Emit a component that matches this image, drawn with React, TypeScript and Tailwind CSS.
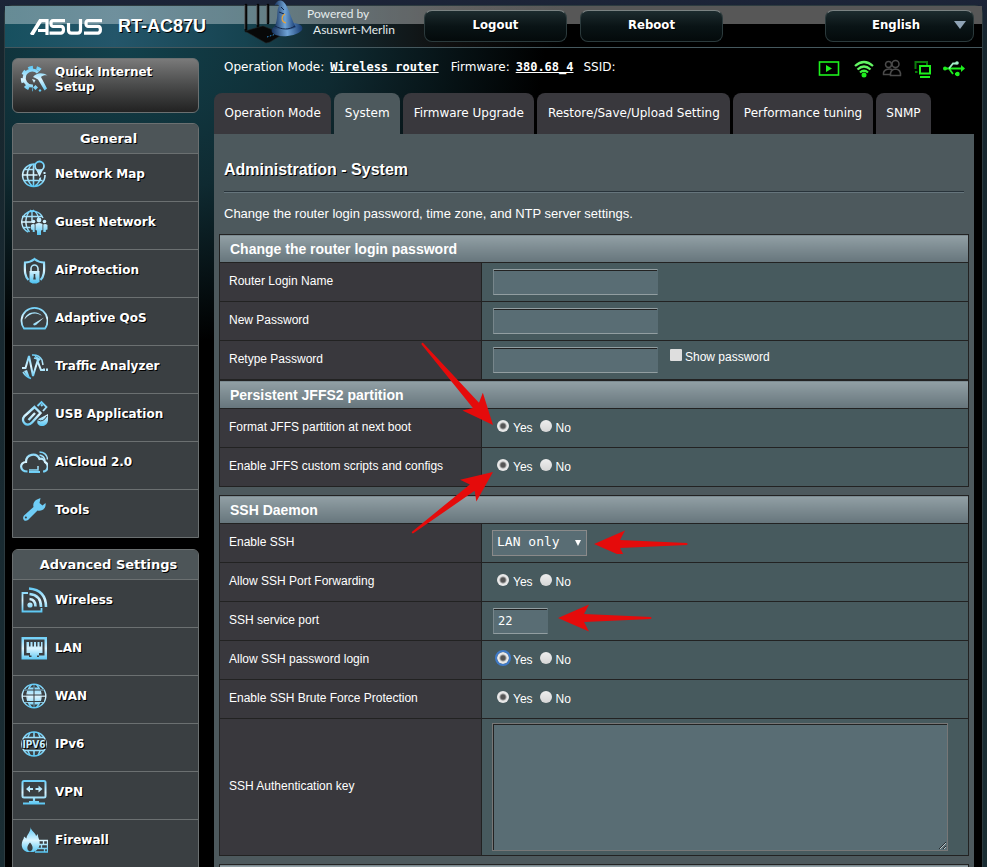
import type { ReactNode } from "react";

const verdana = "font-['DejaVu_Sans',sans-serif]";
const tahoma = "font-['DejaVu_Sans_Condensed','DejaVu_Sans',sans-serif]";
const arial = "font-['Liberation_Sans',Arial,sans-serif]";
const mono = "font-['DejaVu_Sans_Mono',monospace]";
const shadow = "[text-shadow:1px_1px_0_#000]";

function Icon({ children }: { children: ReactNode }) {
  return (
    <svg
      viewBox="0 0 28 28"
      className="h-7 w-7 shrink-0"
      fill="none"
      stroke="url(#ice)"
      strokeWidth="1.6"
      aria-hidden="true"
    >
      {children}
    </svg>
  );
}

const ice = "url(#ice)";

const SetupIcon = () => (
  <Icon>
    <path strokeWidth="3" d="M18 7.500A8 8 0 1 0 13 21" />
    <path strokeWidth="3.500" strokeDasharray="4.500 3.600" d="M20.500 5A11 11 0 1 0 13 24.500" />
    <path
      fill={ice}
      stroke="none"
      d="M13 12c4-5 10-4.500 14.500-1.500-3-.5-5 .3-6.500 1.500l6 11.500-2.500 2L18 14.500c-2-1-3.500-2-5-2.500zM12 14l3.500 1-1.500 3zM15.500 20l2.500 2.500-2.500 2.500-2.500-2.500zM20 24l1.500 1.500L20 27l-1.500-1.500z"
    />
  </Icon>
);

const MapIcon = () => (
  <Icon>
    <path d="M15 4.200A11.200 11.200 0 1 0 25 15M13.500 4v22.500M2.500 15h15M4.500 9.500h10M4.500 20.500h18M12.500 4c-7 6-7 16 0 22.500M15 26c3.500-2.500 5-5 5.500-8.500" />
    <circle cx="19.500" cy="6" r="4.500" strokeWidth="1.800" />
    <path fill={ice} stroke="none" d="M16 9.500h7L19.500 17zM19 18.500h2v2h-2zM23.500 12h2v2h-2z" />
  </Icon>
);

const GuestIcon = () => (
  <Icon>
    <path
      strokeWidth="1.4"
      d="M8 24A11 11 0 1 1 23 10M2 8.500h20M1 14h12M2.500 19.500h8M12 2v12M11 2C5 7 4 17 9.500 24M13 2c3 2 5 5 5.500 8"
    />
    <g fill={ice} stroke="none">
      <circle cx="19" cy="12" r="2.400" />
      <circle cx="13.500" cy="13.500" r="1.800" />
      <circle cx="24.500" cy="13.500" r="1.800" />
      <path d="M15.500 16q3.500-2 7 0v6l-1.500.5V27h-4v-4.500l-1.500-.5zM11 17q2-1.500 3.700-.5v7.500h-2V22L11 21.500zM23.300 16.500q2.200-1 4.200.5v4.500l-1.700.5v2h-2.500z" />
    </g>
  </Icon>
);

const ShieldIcon = () => (
  <Icon>
    <path
      strokeWidth="2.2"
      d="M8.500 24C5 20.500 4.500 16 5 6.500c3.500 0 6.500-1 9.500-3.500 3 2.500 6 3.500 9.500 3.500.5 9.500 0 14-3.500 17.500"
    />
    <path strokeWidth="1.5" d="M11 15v-2.500a3.500 3.500 0 0 1 7 0V15" />
    <path
      fill={ice}
      fillRule="evenodd"
      stroke="none"
      d="M9.500 15h10v11l-3 1.500h-4l-3-1.500zM13.700 18v2.500l-.5 3h2.600l-.5-3V18z"
    />
  </Icon>
);

const GaugeIcon = () => (
  <Icon>
    <path strokeWidth="1.8" d="M4 24.500a13 13 0 1 1 21 0z" />
    <path fill={ice} stroke="none" d="M4.500 15.500C6 8 17 5.500 22 12c-5-4-12-3.500-17.500 3.500zM13 20l11-6.500-8 7.500-2 .5z" />
  </Icon>
);

const TrafficIcon = () => (
  <Icon>
    <path strokeWidth="2" d="M2 16h3.500L9 4l4 20 4.500-15 3.500 9h2" />
    <path strokeWidth="1.5" d="M3 20q3 5 8 6.500M12 3q7-.5 10 5l1 5M14 6l4 1" />
    <path fill={ice} stroke="none" d="M4 19l3-1 3 8q-4-2-6-7zM14 3l7 4-3 3zM23 16.500h2v2.500h-2zM26 16.500h2v2.500h-2z" />
  </Icon>
);

const UsbStickIcon = () => (
  <Icon>
    <path
      strokeWidth="2.4"
      d="M14.500 7l6 6-8.500 9.500c-5 5.500-12-1-7.500-6.500zM15 13l-6.500 7"
    />
    <path strokeWidth="1.8" d="M17.500 6l4-4 5 5-3.500 4M21 4.500l1.500 1.500" />
    <path fill={ice} stroke="none" d="M28 14v6c0 4-3.500 6.500-7 6-3.500-.5-5-4-2.500-7z" />
    <path stroke="#3a3f42" strokeWidth="1" d="M18 20q5 3 9-4" />
  </Icon>
);

const CloudIcon = () => (
  <Icon>
    <path
      strokeWidth="2.2"
      d="M7.500 23.500C-1 23.500-.5 14 6 14c0-8 10.500-10 13.500-3 3-1 5 1 5.500 3 4.500 2.500 3 9.500-2 9.500M9 24h11"
    />
    <path strokeWidth="1.5" d="M19.500 7q5 1 5.500 5.500M19.500 4q7.500.5 8 7.500M9 22h9v-4" />
  </Icon>
);

const ToolsIcon = () => (
  <Icon>
    <path
      fill="#6fcdf6"
      stroke="none"
      fillRule="evenodd"
      d="M17 3.500l3.500-1.500-1 5 3 2.500 3-2.500c1 5.500-3.500 8.500-8 7.500L8 24c-3.500 2.500-6.500-1.500-4-4.500L13.500 11c-.8-3 .5-6 3.500-7.500zM5.500 20.500a1 1 0 1 0 1.200 1.500 1 1 0 0 0-1.200-1.500z"
    />
  </Icon>
);

const WirelessIcon = () => (
  <Icon>
    <path strokeWidth="1.8" d="M8 7H2.500v18.500h19V22" />
    <circle cx="10" cy="19" r="2.600" fill={ice} stroke="none" />
    <path strokeWidth="2.6" d="M9.500 13q6 .5 6 7.500M9.500 8q11.500 1 11.500 13M9 2.500Q26 4 26 21" />
  </Icon>
);

const LanIcon = () => (
  <Icon>
    <path
      fill={ice}
      fillRule="evenodd"
      stroke="none"
      d="M1.500 3h25.500v22.500h-25.500zM4 5.500v16h5v1.500h10v-1.500h5.500v-16z"
    />
    <path
      fill={ice}
      stroke="none"
      d="M6.500 8h2.500v4.500H10.500V8h2v4.500H14V8h2v4.500H17.500V8h2v4.500H21V8h1.500v11H19v2.500h-2V24h-5.500v-2.500H10V19H6.500z"
    />
  </Icon>
);

const GlobeIcon = () => (
  <Icon>
    <circle cx="14" cy="14" r="11.800" strokeWidth="1.4" />
    <path fill={ice} stroke="none" d="M9.500 5.500h9q4 8.500 0 17h-9q-4-8.500 0-17z" />
    <path strokeWidth="1.4" d="M2 14h24M4 8h20M4 20h20M14 2v24M11.500 2.500c-6 7-6 16 0 23M16.500 2.500c6 7 6 16 0 23" />
    <path stroke="#3a3f42" strokeWidth="1" d="M3 13h22M4 19.500h20M4 8h20M14 3v22" />
  </Icon>
);

const Ipv6Icon = () => (
  <Icon>
    <circle cx="14" cy="14" r="12" />
    <path d="M14 2v6M14 20v6M4 7.500h20M4 20.500h20M10 2.500L7.500 8M18 2.500L20.500 8M10 25.500L7.500 20M18 25.500l2.500-5.500" />
    <path fill="#3a3f42" stroke="none" d="M2 9.500h24v9.500H2z" />
    <text
      x="14"
      y="18"
      textAnchor="middle"
      fontSize="10"
      fontWeight="700"
      fontFamily="DejaVu Sans Condensed, sans-serif"
      fill="#c9efff"
      stroke="none"
    >
      IPV6
    </text>
  </Icon>
);

const VpnIcon = () => (
  <Icon>
    <rect x="2.500" y="3" width="23" height="16.500" rx="1.500" strokeWidth="2" />
    <path strokeWidth="2.2" d="M14 19v5M3 25.500h22" />
    <path fill={ice} stroke="none" d="M6 11l4-3.500v2.500h3v2h-3v2.500zM22.500 11l-4-3.500v2.500h-3v2h3v2.500zM9 23h10v2H9z" />
  </Icon>
);

const FirewallIcon = () => (
  <Icon>
    <path
      fill={ice}
      fillRule="evenodd"
      stroke="none"
      d="M10.500 1c.5 4 5 5.500 5.500 9l2-2c-.5 4 2.500 5.500 1.500 11-.5 3.500-3 6-6 7H7c-4-1.500-6-5-5-9.500.5-2.500 2-3.500 2-6l2.500 2c0-4 4.500-6.500 4-11.500zM10 25.500c4-1.500 3-6 0-9-3 3-4 7.500 0 9z"
    />
    <path strokeWidth="1.3" d="M19 14.500h8.500V26H15M19 18.500h8.500M18 22.500h9.500M23.500 14.500v4M21.500 18.500v4M24.500 22.500V26" />
  </Icon>
);

type Item = [string, () => ReactNode];

const general: Item[] = [
  ["Network Map", MapIcon],
  ["Guest Network", GuestIcon],
  ["AiProtection", ShieldIcon],
  ["Adaptive QoS", GaugeIcon],
  ["Traffic Analyzer", TrafficIcon],
  ["USB Application", UsbStickIcon],
  ["AiCloud 2.0", CloudIcon],
  ["Tools", ToolsIcon],
];

const advanced: Item[] = [
  ["Wireless", WirelessIcon],
  ["LAN", LanIcon],
  ["WAN", GlobeIcon],
  ["IPv6", Ipv6Icon],
  ["VPN", VpnIcon],
  ["Firewall", FirewallIcon],
];

function Menu({ title, items }: { title: string; items: Item[] }) {
  return (
    <section className="overflow-hidden rounded-t-md border border-[#6b7071] bg-[#3a3f42]">
      <h2 className="flex h-[29px] items-center justify-center bg-[#4d5558] pt-px pl-1.5 text-[13px] leading-4">{title}</h2>
      {items.map(([label, Glyph]) => (
        <a
          key={label}
          href="#"
          className="flex h-12 items-start gap-[7px] border-t border-[#6b7071] pt-1.5 pl-[7px] leading-7"
        >
          <Glyph />
          {label}
        </a>
      ))}
    </section>
  );
}

const barButton =
  "flex h-8 items-center justify-center rounded-lg border border-[#2b3a3c] border-t-[#7b8383] bg-linear-to-b from-[#1d2c2f] via-[#0a1416] to-[#040a0b] font-bold text-[13px] leading-4 pb-0.5 " +
  shadow;

function Header() {
  return (
    <header className="flex h-[42px] items-start border-b border-[#45585e] bg-[linear-gradient(to_bottom,rgba(255,255,255,0.34)_0,rgba(255,255,255,0.34)_18px,transparent_18px),linear-gradient(to_right,#17505f_0,#24566a_110px,#164350_240px,#132a31_320px,#101010_440px,#000_560px)] pl-[25px]">
      <svg viewBox="0 0 72 16" className="mt-[13px] h-4 w-[72px] shrink-0" fill="none" stroke="#fff" strokeWidth="3.200" aria-label="ASUS">
        <path strokeWidth="3.8" d="M1.500 16L10.500 1.500" />
        <path d="M9 1.600H17V16M8 11.500H17" />
        <path d="M35 1.600H23Q21 1.600 21 4.500T23 7.300H31Q33.500 7.300 33.500 10.500T31 14.200H19.500" />
        <path d="M38.500 4V11Q38.500 14.200 41.500 14.200H47.500Q50.500 14.200 50.500 11V0" />
        <path d="M72 1.600H58Q56 1.600 56 4.500T58 7.300H68Q70.400 7.300 70.400 10.500T68 14.200H54" />
      </svg>
      <h1 className={`ml-4 shrink-0 pt-2.5 text-lg leading-5 font-bold ${arial} ${shadow}`}>RT-AC87U</h1>
      <svg viewBox="0 0 60 44" className="-mt-1.5 ml-[37px] h-11 w-[60px] shrink-0" aria-hidden="true">
        <defs>
          <linearGradient id="hat" x1="0" x2="1">
            <stop offset="0" stopColor="#16305a" />
            <stop offset=".5" stopColor="#6fa3d6" />
            <stop offset="1" stopColor="#173a70" />
          </linearGradient>
        </defs>
        <path stroke="#050505" strokeWidth="2.600" strokeLinecap="round" d="M3 5v26M15 5v22M25 5v18" />
        <path stroke="#777" strokeWidth=".6" d="M1.800 5v24M13.800 5v20M23.800 5v18" />
        <path fill="#080808" stroke="#222" strokeWidth=".6" d="M2 31l18-5 20 8-13 8-4 1z" />
        <path stroke="#2e8bd0" strokeDasharray="1.500 1.500" d="M24 37l9-3" />
        <ellipse cx="44" cy="29.500" rx="15.500" ry="6.500" fill="url(#hat)" transform="rotate(-6 44 29.500)" />
        <path
          fill="url(#hat)"
          d="M31 28C36 19 33 10 36 6c-1-2-3-1-5 0 2-4 4-6 7-5.500C45 2 48 20 53 27c-6 4-16 4-22 1z"
        />
        <path fill="none" stroke="#102448" d="M32 26c7 4 14 4 20 0M38 7l3 3M36 12l5 2" />
        <path fill="none" stroke="#e7a43c" strokeWidth="1.2" d="M42 14c-4 2-4 8 1 9" />
      </svg>
      <p className="ml-1 w-[117px] shrink-0 font-['Lato',sans-serif] text-xs leading-4 text-[#e4ebec]">
        Powered by
        <span className="block pl-1.5">Asuswrt-Merlin</span>
      </p>
      <div className="mt-1 mr-2 flex grow gap-[13px]">
        <button type="button" className={`${barButton} w-[143px]`}>Logout</button>
        <button type="button" className={`${barButton} w-[143px]`}>Reboot</button>
        <button type="button" className={`${barButton} ml-auto w-[149px] pr-1.5 pl-[46px]`}>
          English
          <svg viewBox="0 0 14 8" className="ml-auto h-2 w-3.5" aria-hidden="true">
            <path fill="#8fa3b5" d="M1 0h12L7 8z" />
          </svg>
        </button>
      </div>
    </header>
  );
}

function StatusIcons() {
  return (
    <div className="ml-auto flex items-start gap-2.5 pr-2">
      <svg viewBox="0 0 22 22" className="h-[22px] w-[22px]" fill="none" stroke="#1df01d" strokeWidth="1.6" aria-label="Media server">
        <rect x="1.500" y="4" width="19" height="13" />
        <path fill="#1df01d" stroke="none" d="M8 7l6 3.500-6 3.500z" />
      </svg>
      <svg viewBox="0 0 24 22" className="ml-0.5 h-[22px] w-6" fill="none" stroke="#3df03d" strokeWidth="2.2" aria-label="Wi-Fi">
        <path d="M3 8q9-8 18 0" stroke="#63f563" />
        <path d="M5.500 11.500q6.500-6 13 0" stroke="#63f563" />
        <path d="M8 14.500q4-3.500 8 0" />
        <circle cx="12" cy="17" r="2.500" fill="#1df01d" stroke="none" />
      </svg>
      <svg viewBox="0 0 20 22" className="-ml-1 h-[22px] w-5" fill="none" stroke="#4a4a4a" strokeWidth="1.5" aria-label="Guests">
        <circle cx="6.500" cy="6.500" r="3" />
        <circle cx="13.500" cy="6" r="3.500" />
        <path d="M10 11.500q-3-1-5.500 0Q1 13 1.500 16.500H8M8.500 17.500q-.5-6 5-6.500 5.500.5 5 6.500z" />
      </svg>
      <svg viewBox="0 0 18 22" className="ml-0.5 h-[22px] w-[18px]" fill="none" stroke="#1df01d" strokeWidth="2" aria-label="Clients">
        <path stroke="#0c7a0c" d="M1.500 11V4H13v3" />
        <rect x="6" y="8" width="10" height="7.500" />
        <path d="M6 19h10" />
        <path stroke="#0c7a0c" d="M1 14h2.500" />
      </svg>
      <svg viewBox="0 0 24 22" className="h-[22px] w-6" fill="none" stroke="#1df01d" strokeWidth="1.8" aria-label="USB">
        <path d="M3 10.500h17M11 16L7 10.500M13 16h3" />
        <path stroke="#a0f0c8" d="M7 10.500l4-5h3.500" />
        <path fill="#1df01d" stroke="none" d="M19 7l4 3.500-4 3.500z" />
        <circle cx="3" cy="10.500" r="2" fill="#1df01d" stroke="none" />
        <circle cx="15" cy="5" r="1.800" fill="#a0f0c8" stroke="none" />
        <circle cx="15.500" cy="16" r="2.200" fill="#1df01d" stroke="none" />
      </svg>
    </div>
  );
}

const tabs = [
  "Operation Mode",
  "System",
  "Firmware Upgrade",
  "Restore/Save/Upload Setting",
  "Performance tuning",
  "SNMP",
];

function Section({ title, children }: { title?: string; children?: ReactNode }) {
  return (
    <table className="w-full table-fixed border-collapse border border-[#222]">
      <colgroup>
        <col className="w-[262px]" />
        <col />
      </colgroup>
      <thead>
        <tr className="h-7">
          <th
            colSpan={2}
            className="border border-[#222] bg-linear-to-b from-[#92a0a5] to-[#66757c] p-0 pl-2.5 text-left text-sm leading-4 font-bold"
          >
            {title}
          </th>
        </tr>
      </thead>
      <tbody>{children}</tbody>
    </table>
  );
}

function Row({ label, id, children }: { label: string; id?: string; children: ReactNode }) {
  return (
    <tr className="h-[39px]">
      <th scope="row" className="border border-[#222] bg-[#39383d] p-0 pb-0.5 pl-[9px] text-left font-normal">
        {id ? <label htmlFor={id}>{label}</label> : label}
      </th>
      <td className="border border-[#222] bg-[#475a5e] p-0 pl-2.5">{children}</td>
    </tr>
  );
}

const field =
  "block h-[26px] border border-y-[#929ea1] border-r-[#596d74] border-l-[#77868b] bg-[#596d74] px-1 text-xs text-white shadow-[inset_0_1px_0_#222] outline-none " +
  mono;

function Text({ id, type = "text" }: { id: string; type?: string }) {
  return <input id={id} type={type} className={`${field} ml-px w-[165px]`} />;
}

const radio =
  "mr-1 mb-1 h-3 w-3 shrink-0 appearance-none rounded-full bg-[linear-gradient(#eee,#d6d6d6)] checked:bg-[radial-gradient(circle,#555_0,#555_2px,#999_3px,#e8e8e8_4px)]";

function YesNo({ name, focus = false }: { name: string; focus?: boolean }) {
  return (
    <div role="radiogroup" aria-label={name} className="flex items-center gap-[7px] pl-[5px]">
      <label className="flex items-center">
        <input
          type="radio"
          name={name}
          defaultChecked
          className={focus ? `${radio} outline-2 outline-[#3f7ac8]` : radio}
        />
        Yes
      </label>
      <label className="flex items-center">
        <input type="radio" name={name} className={radio} />
        No
      </label>
    </div>
  );
}

function Arrow({ x, y, angle, length }: { x: number; y: number; angle: number; length: number }) {
  return (
    <path
      fill="#e50b0b"
      transform={`translate(${x} ${y}) rotate(${angle})`}
      d={`M0 0L31 -13.500L26 -4L${length - 1} -1Q${length} 0 ${length - 1} 1L26 4L31 13.500Z`}
    />
  );
}

export default function App() {
  return (
    <div className="h-screen overflow-hidden bg-[linear-gradient(to_bottom,#1c2438_0,#17262e_40px,#1a2d33_100%)] px-1 pt-[5px] text-xs text-white">
      <svg width="0" height="0" className="absolute" aria-hidden="true">
        <defs>
          <linearGradient id="ice" gradientUnits="userSpaceOnUse" x1="0" y1="2" x2="0" y2="27">
            <stop offset="0" stopColor="#63cbf7" />
            <stop offset=".5" stopColor="#d9f4ff" />
            <stop offset="1" stopColor="#4fc3f2" />
          </linearGradient>
        </defs>
      </svg>
      <div
        className={`rounded-t-lg border border-[#2d3b40] bg-black bg-[radial-gradient(ellipse_420px_300px_at_120px_40px,#12414c_0,#0f2a31_50%,transparent_100%)] ${tahoma}`}
      >
        <Header />
        <div className="flex items-start gap-[15px] pt-2.5 pr-2 pl-[7px]">
          <nav className={`flex w-[187px] shrink-0 flex-col text-xs font-bold ${verdana} ${shadow}`}>
            <a
              href="#"
              className="mb-2.5 flex h-[55px] items-start gap-[7px] rounded-md border border-[#6b7071] bg-linear-to-b from-[#7a7a7a] via-[#4a4b4b] to-[#222] pt-1.5 pl-[7px] leading-[15px]"
            >
              <SetupIcon />
              <span>
                Quick Internet
                <br />
                Setup
              </span>
            </a>
            <Menu title="General" items={general} />
            <div className="h-[11px]" />
            <Menu title="Advanced Settings" items={advanced} />
          </nav>
          <main className="min-w-0 grow">
            <div className={`flex h-[35px] items-start pl-2.5 text-xs leading-[18px] ${verdana}`}>
              <p className="flex shrink-0">
                Operation Mode:
                <a href="#" className={`mr-3 ml-1.5 font-bold underline ${mono}`}>
                  Wireless router
                </a>
                Firmware:
                <a href="#" className={`mr-2.5 ml-1.5 font-bold underline ${mono}`}>
                  380.68_4
                </a>
                SSID:
              </p>
              <StatusIcons />
            </div>
            <div className={`flex w-[717px] gap-[3px] ${verdana}`}>
              {tabs.map((t) => (
                <a
                  key={t}
                  href="#"
                  className={`flex h-[41px] grow items-center justify-center rounded-t-lg px-[9px] pb-0.5 whitespace-nowrap ${t === "System" ? "bg-[#4d595d]" : "bg-[#39383d]"}`}
                >
                  {t}
                </a>
              ))}
            </div>
            <div className={`relative bg-[#4d595d] px-[5px] pt-[26px] ${arial}`}>
              <h2 className={`px-[5px] text-base leading-5 font-bold ${shadow}`}>Administration - System</h2>
              <hr className="mx-[5px] mt-[11px] border-t border-b border-t-[#28333a] border-b-[#66757c]" />
              <p className="mt-3 mb-3 px-[5px] text-[13px] leading-[17px]">
                Change the router login password, time zone, and NTP server settings.
              </p>
              <Section title="Change the router login password">
                <Row label="Router Login Name" id="login"><Text id="login" /></Row>
                <Row label="New Password" id="new"><Text id="new" type="password" /></Row>
                <Row label="Retype Password" id="retype">
                  <div className="flex items-start">
                    <Text id="retype" type="password" />
                    <label className="ml-3 flex items-center pt-0.5">
                      <input type="checkbox" className="mr-[3px] mb-1 h-3 w-3 appearance-none rounded-[1px] bg-[#dedede]" />
                      Show password
                    </label>
                  </div>
                </Row>
              </Section>
              <Section title="Persistent JFFS2 partition">
                <Row label="Format JFFS partition at next boot"><YesNo name="format" /></Row>
                <Row label="Enable JFFS custom scripts and configs"><YesNo name="scripts" /></Row>
              </Section>
              <div className="mt-2">
                <Section title="SSH Daemon">
                  <Row label="Enable SSH" id="ssh">
                    <div className="relative w-[95px]">
                      <select
                        id="ssh"
                        className={`block h-[26px] w-full appearance-none border border-[#8a8a8a] bg-[#596d74] pb-0.5 pl-1 text-[13px] text-white ${mono}`}
                      >
                        <option>LAN only</option>
                      </select>
                      <svg viewBox="0 0 6 6" className="absolute top-2.5 right-1.5 h-1.5 w-1.5" aria-hidden="true">
                        <path fill="#fff" d="M0 0h6L3 6z" />
                      </svg>
                    </div>
                  </Row>
                  <Row label="Allow SSH Port Forwarding"><YesNo name="forwarding" /></Row>
                  <Row label="SSH service port" id="port">
                    <input id="port" defaultValue="22" className={`${field} ml-px w-[55px]`} />
                  </Row>
                  <Row label="Allow SSH password login"><YesNo name="pwlogin" focus /></Row>
                  <Row label="Enable SSH Brute Force Protection"><YesNo name="brute" /></Row>
                  <Row label="SSH Authentication key" id="key">
                    <textarea
                      id="key"
                      className="my-1 block h-32 w-[456px] resize border border-[#777] bg-[#596d74] shadow-[inset_1px_1px_0_#222]"
                    />
                  </Row>
                </Section>
              </div>
              <div className="mt-2">
                <Section />
              </div>
              <svg className="pointer-events-none absolute top-0 left-0 h-[420px] w-[500px]" viewBox="0 0 500 420" aria-hidden="true">
                <Arrow x={279} y={291} angle={229} length={109} />
                <Arrow x={279} y={338} angle={143} length={102} />
                <Arrow x={380} y={410} angle={0} length={94} />
              </svg>
              <svg className="pointer-events-none absolute top-[464px] left-[344px] h-10 w-[100px]" viewBox="0 0 100 40" aria-hidden="true">
                <Arrow x={0} y={20} angle={0} length={94} />
              </svg>
            </div>
          </main>
        </div>
      </div>
    </div>
  );
}
